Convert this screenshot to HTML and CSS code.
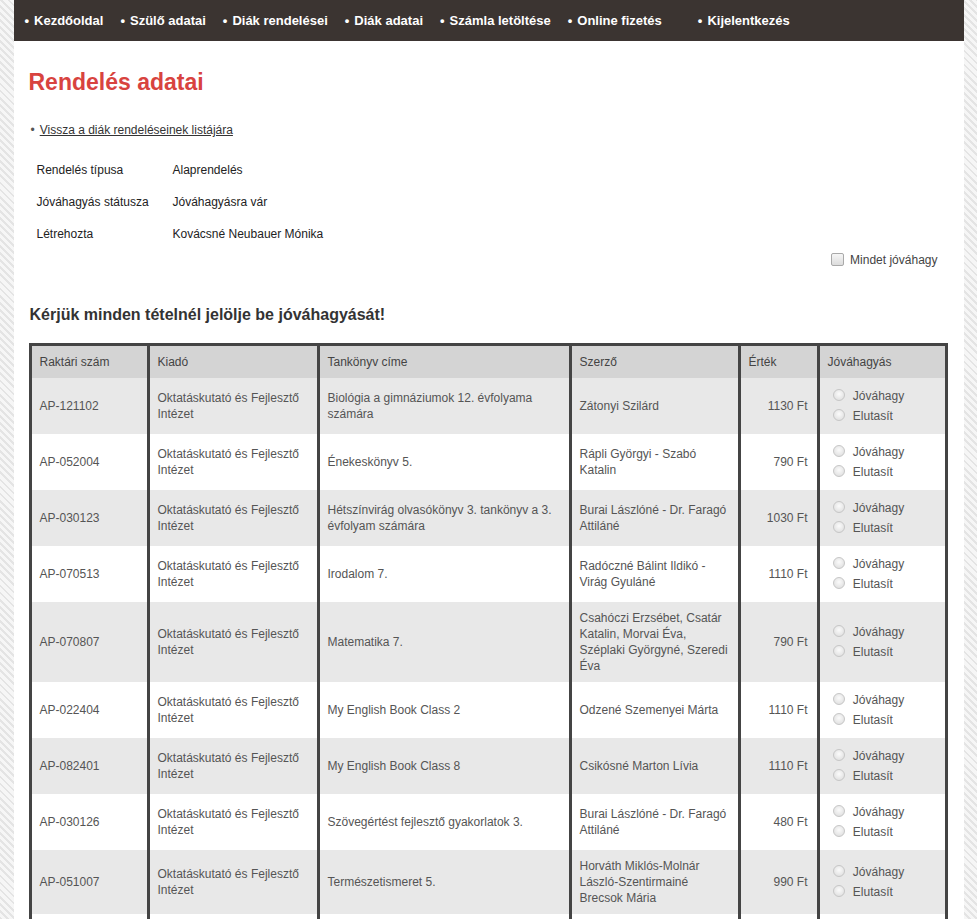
FILE: index.html
```html
<!DOCTYPE html>
<html lang="hu">
<head>
  <meta charset="UTF-8">
  <title>Rendelés adatai</title>
  <link rel="stylesheet" href="styles.css">
</head>
<body>

  <div class="page">
    <ul class="menu">
      <li><a href="#">Kezdőoldal</a></li>
      <li><a href="#">Szülő adatai</a></li>
      <li><a href="#">Diák rendelései</a></li>
      <li><a href="#">Diák adatai</a></li>
      <li><a href="#">Számla letöltése</a></li>
      <li class="wide"><a href="#">Online fizetés</a></li>
      <li><a href="#">Kijelentkezés</a></li>
    </ul>

    <div class="content">
      <h1>Rendelés adatai</h1>

      <ul class="links">
        <li><a href="#">Vissza a diák rendeléseinek listájára</a></li>
      </ul>

      <table class="details">
        <tr>
          <td class="label">Rendelés típusa</td>
          <td>Alaprendelés</td>
        </tr>
        <tr>
          <td class="label">Jóváhagyás státusza</td>
          <td>Jóváhagyásra vár</td>
        </tr>
        <tr>
          <td class="label">Létrehozta</td>
          <td>Kovácsné Neubauer Mónika</td>
        </tr>
      </table>

      <div class="approve-all">
        <label><input type="checkbox" id="approveAll" onclick="approveAll()"> Mindet jóváhagy</label>
      </div>

      <h2>Kérjük minden tételnél jelölje be jóváhagyását!</h2>

      <table class="items">
        <thead>
          <tr>
            <th class="col-code">Raktári szám</th>
            <th class="col-pub">Kiadó</th>
            <th class="col-title">Tankönyv címe</th>
            <th class="col-author">Szerző</th>
            <th class="col-price">Érték</th>
            <th class="col-approve">Jóváhagyás</th>
          </tr>
        </thead>
        <tbody>
          <tr>
            <td>AP-121102</td>
            <td>Oktatáskutató és Fejlesztő Intézet</td>
            <td>Biológia a gimnáziumok 12. évfolyama<br>számára</td>
            <td>Zátonyi Szilárd</td>
            <td class="price">1130 Ft</td>
            <td>
              <label><input type="radio" name="r1" value="1"> Jóváhagy</label>
              <label><input type="radio" name="r1" value="0"> Elutasít</label>
            </td>
          </tr>
          <tr>
            <td>AP-052004</td>
            <td>Oktatáskutató és Fejlesztő Intézet</td>
            <td>Énekeskönyv 5.</td>
            <td>Rápli Györgyi - Szabó<br>Katalin</td>
            <td class="price">790 Ft</td>
            <td>
              <label><input type="radio" name="r2" value="1"> Jóváhagy</label>
              <label><input type="radio" name="r2" value="0"> Elutasít</label>
            </td>
          </tr>
          <tr>
            <td>AP-030123</td>
            <td>Oktatáskutató és Fejlesztő Intézet</td>
            <td>Hétszínvirág olvasókönyv 3. tankönyv a 3.<br>évfolyam számára</td>
            <td>Burai Lászlóné - Dr. Faragó<br>Attiláné</td>
            <td class="price">1030 Ft</td>
            <td>
              <label><input type="radio" name="r3" value="1"> Jóváhagy</label>
              <label><input type="radio" name="r3" value="0"> Elutasít</label>
            </td>
          </tr>
          <tr>
            <td>AP-070513</td>
            <td>Oktatáskutató és Fejlesztő Intézet</td>
            <td>Irodalom 7.</td>
            <td>Radóczné Bálint Ildikó -<br>Virág Gyuláné</td>
            <td class="price">1110 Ft</td>
            <td>
              <label><input type="radio" name="r4" value="1"> Jóváhagy</label>
              <label><input type="radio" name="r4" value="0"> Elutasít</label>
            </td>
          </tr>
          <tr>
            <td>AP-070807</td>
            <td>Oktatáskutató és Fejlesztő Intézet</td>
            <td>Matematika 7.</td>
            <td>Csahóczi Erzsébet, Csatár<br>Katalin, Morvai Éva,<br>Széplaki Györgyné, Szeredi<br>Éva</td>
            <td class="price">790 Ft</td>
            <td>
              <label><input type="radio" name="r5" value="1"> Jóváhagy</label>
              <label><input type="radio" name="r5" value="0"> Elutasít</label>
            </td>
          </tr>
          <tr>
            <td>AP-022404</td>
            <td>Oktatáskutató és Fejlesztő Intézet</td>
            <td>My English Book Class 2</td>
            <td>Odzené Szemenyei Márta</td>
            <td class="price">1110 Ft</td>
            <td>
              <label><input type="radio" name="r6" value="1"> Jóváhagy</label>
              <label><input type="radio" name="r6" value="0"> Elutasít</label>
            </td>
          </tr>
          <tr>
            <td>AP-082401</td>
            <td>Oktatáskutató és Fejlesztő Intézet</td>
            <td>My English Book Class 8</td>
            <td>Csikósné Marton Lívia</td>
            <td class="price">1110 Ft</td>
            <td>
              <label><input type="radio" name="r7" value="1"> Jóváhagy</label>
              <label><input type="radio" name="r7" value="0"> Elutasít</label>
            </td>
          </tr>
          <tr>
            <td>AP-030126</td>
            <td>Oktatáskutató és Fejlesztő Intézet</td>
            <td>Szövegértést fejlesztő gyakorlatok 3.</td>
            <td>Burai Lászlóné - Dr. Faragó<br>Attiláné</td>
            <td class="price">480 Ft</td>
            <td>
              <label><input type="radio" name="r8" value="1"> Jóváhagy</label>
              <label><input type="radio" name="r8" value="0"> Elutasít</label>
            </td>
          </tr>
          <tr>
            <td>AP-051007</td>
            <td>Oktatáskutató és Fejlesztő Intézet</td>
            <td>Természetismeret 5.</td>
            <td>Horváth Miklós-Molnár<br>László-Szentirmainé<br>Brecsok Mária</td>
            <td class="price">990 Ft</td>
            <td>
              <label><input type="radio" name="r9" value="1"> Jóváhagy</label>
              <label><input type="radio" name="r9" value="0"> Elutasít</label>
            </td>
          </tr>
          <tr>
            <td>AP-041303</td>
            <td>Oktatáskutató és Fejlesztő Intézet</td>
            <td>Környezetismeret 4.</td>
            <td>Fűköh Borbála</td>
            <td class="price">990 Ft</td>
            <td>
              <label><input type="radio" name="r10" value="1"> Jóváhagy</label>
              <label><input type="radio" name="r10" value="0"> Elutasít</label>
            </td>
          </tr>
        </tbody>
      </table>
    </div>
  </div>

  <script>
    function approveAll() {
      const checked = document.getElementById("approveAll").checked;
      document.querySelectorAll('.items input[value="1"]').forEach(function (radio) {
        radio.checked = checked;
      });
    }
  </script>

</body>
</html>
```

FILE: styles.css
```css
body {
  font-family: "Liberation Sans", Arial, sans-serif;
  font-size: 12px;
  color: #333;
  margin: 0;
  background: repeating-linear-gradient(45deg, #f6f6f6 0, #f6f6f6 3px, #e4e4e4 3px, #e4e4e4 5px);
}

.page {
  width: 950px;
  margin: 0 auto;
  background: white;
}

/* top menu */
.menu {
  list-style: none;
  margin: 0;
  padding: 0 0 0 11px;
  height: 41px;
  display: flex;
  align-items: center;
  gap: 17px;
  background: #3b3431;
}

.menu li::before {
  content: "\2022";
  color: white;
  margin-right: 5px;
  font-weight: bold;
  font-size: 13px;
}

.menu li.wide {
  margin-right: 19px;
}

.menu a {
  color: white;
  font-weight: bold;
  font-size: 13px;
  text-decoration: none;
}

.content {
  padding: 27px 16px 0 15px;
}

h1 {
  margin: 0;
  font-size: 23px;
  line-height: 28px;
  color: #d8433f;
}

.links {
  list-style: none;
  margin: 26px 0 0;
  padding: 0 0 0 2px;
  line-height: 16px;
}

.links li::before {
  content: "\2022";
  color: #555;
  margin-right: 5px;
}

.links a {
  color: #333;
}

.details {
  margin-top: 16px;
  border-collapse: collapse;
}

.details td {
  padding: 8px;
  line-height: 16px;
  color: #222;
}

.details .label {
  width: 120px;
}

.approve-all {
  text-align: right;
  line-height: 20px;
  padding-right: 10px;
  color: #444;
}

.approve-all input {
  appearance: none;
  width: 13px;
  height: 13px;
  margin: 0 3px 0 0;
  vertical-align: -2px;
  border: 1px solid #a9a9a9;
  border-radius: 2px;
  background: linear-gradient(#f6f6f6, #dcdcdc);
}

.approve-all input:checked {
  background: #7a7a7a;
}

h2 {
  margin: 35px 0 0 1px;
  font-size: 16px;
  line-height: 20px;
  color: #333;
}

/* items table */
.items {
  margin-top: 18px;
  width: 919px;
  table-layout: fixed;
  border-spacing: 0;
  border: 3px solid #444;
  color: #555;
}

.items th, .items td {
  box-sizing: border-box;
  padding: 8px;
  line-height: 16px;
  text-align: left;
  vertical-align: middle;
  border-left: 3px solid #444;
}

.items th:first-child, .items td:first-child {
  border-left: none;
}

.items th {
  font-weight: normal;
  background: #d4d4d4;
  color: #444;
}

.items tbody tr:nth-child(odd) td {
  background: #e8e8e8;
}

.col-code { width: 115px; }
.col-pub { width: 170px; }
.col-title { width: 252px; }
.col-author { width: 169px; }
.col-price { width: 79px; }
.col-approve { width: 128px; }

.items .price {
  text-align: right;
  padding-right: 9px;
}

.items label {
  display: block;
  line-height: 20px;
}

.items input[type="radio"] {
  appearance: none;
  width: 12px;
  height: 12px;
  margin: 0 5px 0 5px;
  vertical-align: -1px;
  border: 1px solid #c6c6c6;
  border-radius: 50%;
  background: radial-gradient(circle at 50% 40%, #fbfbfb, #dadada);
}

.items input[type="radio"]:checked {
  background: radial-gradient(circle, #555 0 3px, #f0f0f0 4px);
}
```
